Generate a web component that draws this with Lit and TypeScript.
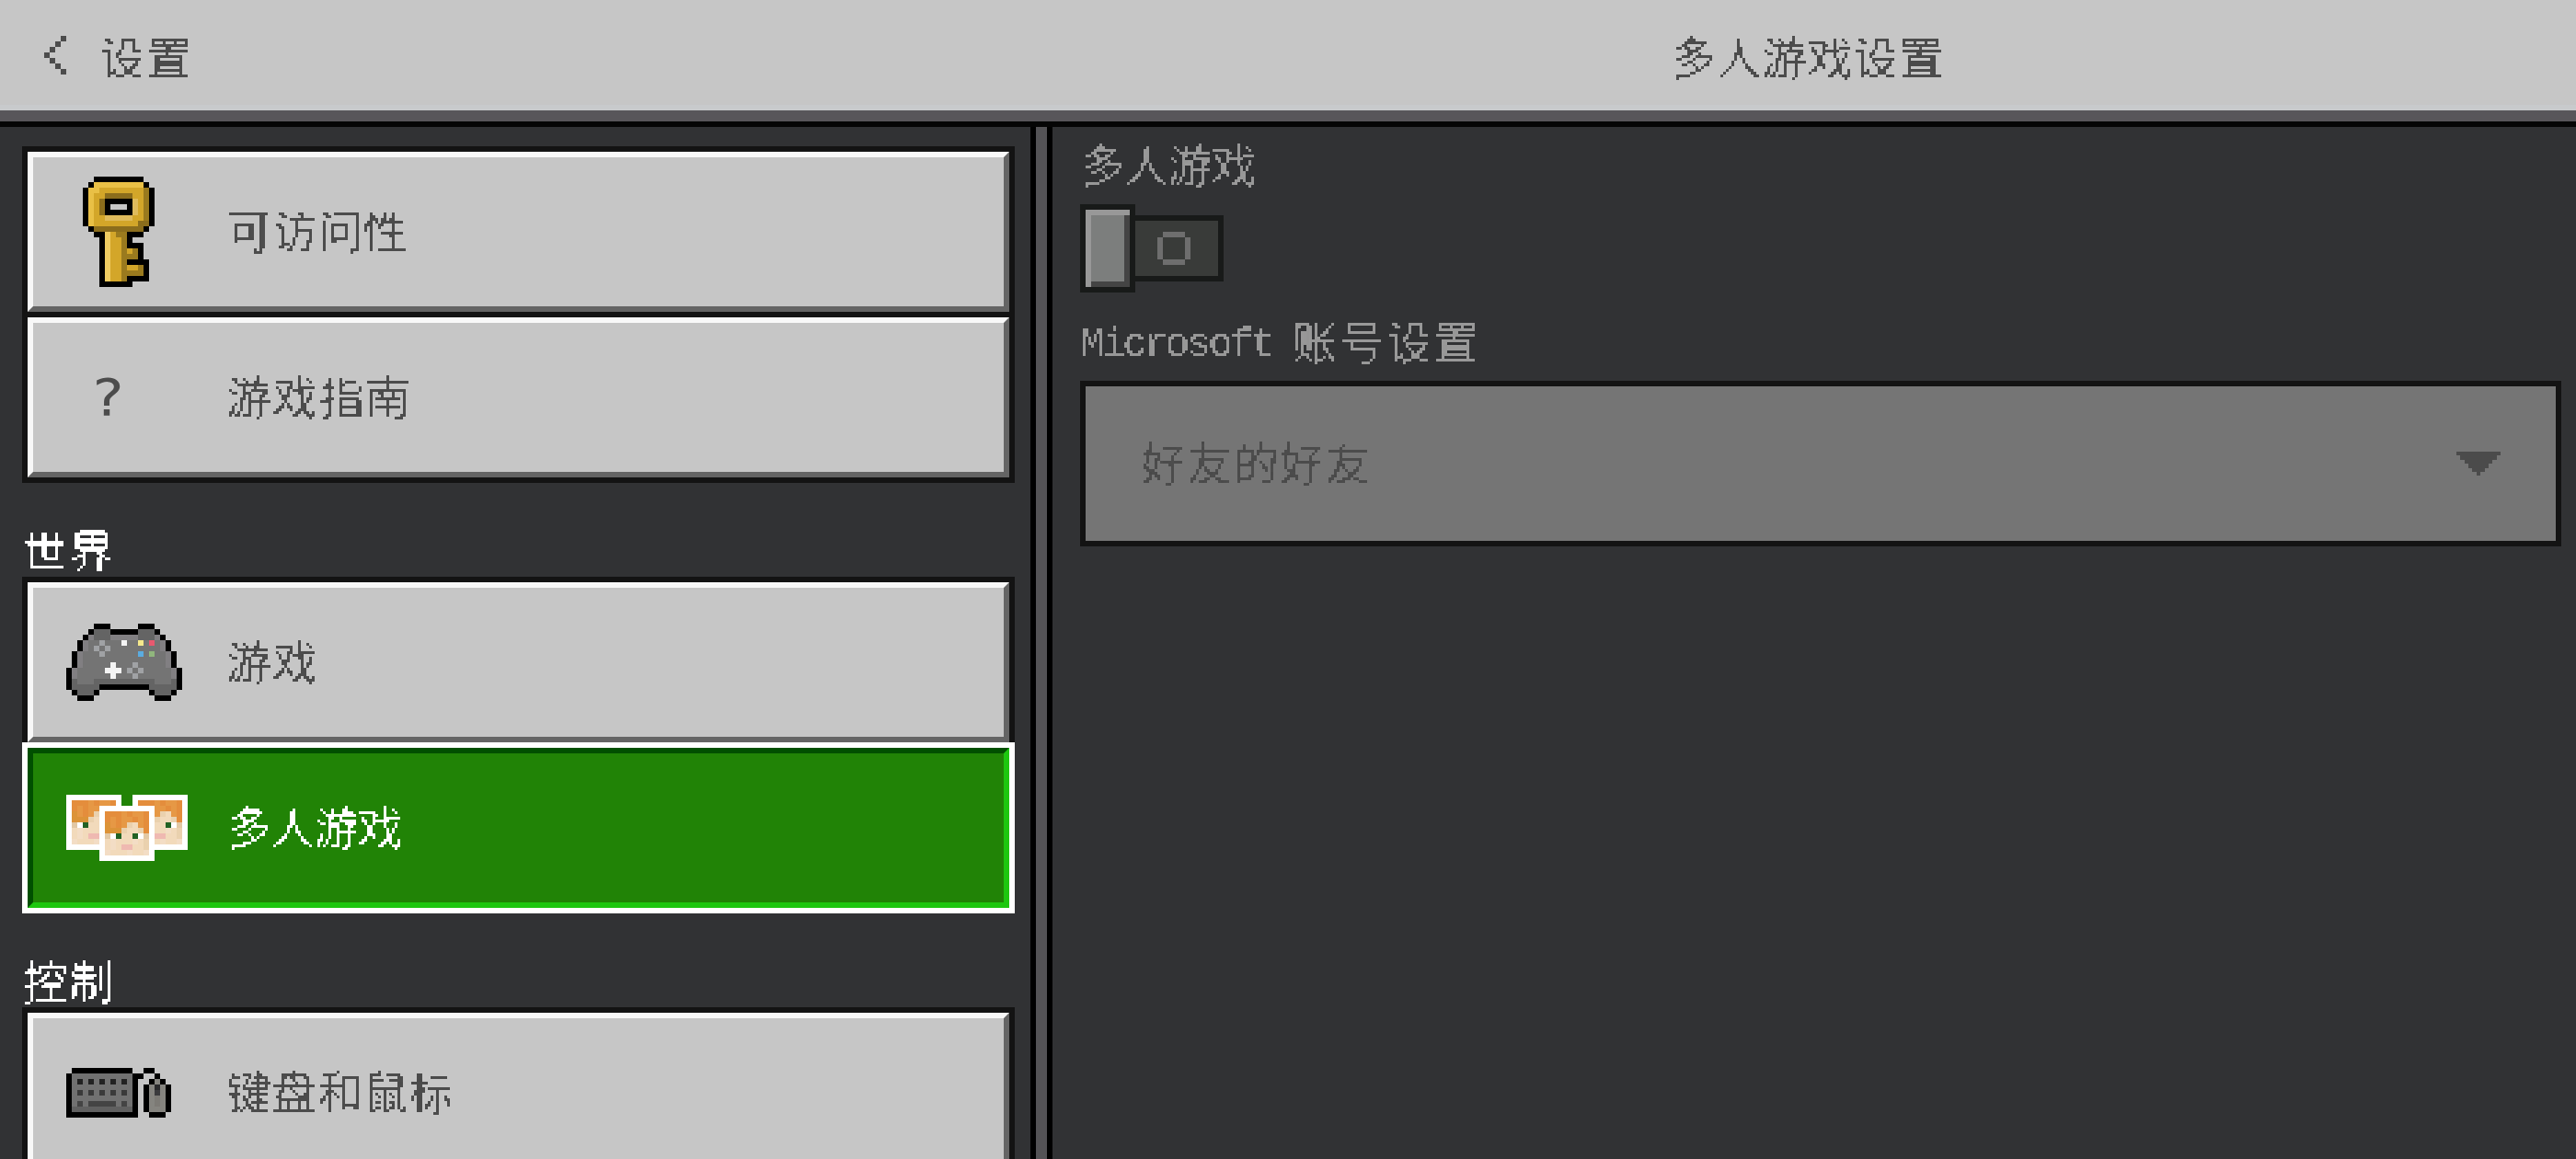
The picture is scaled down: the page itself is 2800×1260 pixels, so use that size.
import { html, svg, css, LitElement } from "lit";
import { customElement, property, state } from "lit/decorators.js";

type Palette = Record<string, string>;

const KEY = [
  "..KKKKKKKKK..",
  ".KLLLLLLLLLK.",
  "KLLMMMMMMMMDK",
  "KLMMEEEEEMMDK",
  "KLMEKKKKKPMDK",
  "KLMEK...KPMDK",
  "KLMEKKKKKPMDK",
  "KLMMPPPPPMMDK",
  "KLMMMMMMMMEEK",
  ".KEEEEEEEEEK.",
  "..KKQMDDKKK..",
  "...KQMMDK....",
  "...KQMMDKKK..",
  "...KQMMDMDK..",
  "...KQMMDDDK..",
  "...KQMMDKKKK.",
  "...KQMMDMMDK.",
  "...KQMMDDDDK.",
  "...KQMMDKKKK.",
  "...KKKKKK....",
];

const KEY_COLORS: Palette = {
  K: "#000000",
  L: "#e9c046",
  M: "#d3a629",
  D: "#9a7a1e",
  E: "#8b6d1c",
  P: "#dfbb5c",
  Q: "#efcc62",
};

const PAD = [
  ".....KKK.....KKK.....",
  "....KdddKKKKKdddK....",
  "...KldddllllldddlK...",
  "..KlbbgbbbwbbybrblK..",
  "..KlbgbgbbbbbbbbblK..",
  ".KlbbbgbbbbbbubvbblK.",
  ".KlbbbbbbbbbbbbbbblK.",
  ".KlbbbbbwbbbgbbbbblK.",
  "KlbbbbbwwwbgbgbbbbblK",
  "KlbbbbbbwbbbgbbbbbblK",
  "KdbbbdddddddddddbbbdK",
  "KdddddKKKKKKKKKdddddK",
  ".KdddK.........KdddK.",
  "..KKK...........KKK..",
];

const PAD_COLORS: Palette = {
  K: "#000000",
  d: "#646464",
  b: "#747474",
  l: "#817f82",
  g: "#a0a2a5",
  w: "#f4f4f4",
  y: "#f5e88c",
  r: "#e8596f",
  u: "#5bace0",
  v: "#90b67d",
};

const KEYBOARD = [
  ".KKKKKKKKKKK..KK...",
  "KbbbbbbbbbbbKK..K..",
  "KbdbdbdbdbdbK..KmK.",
  "KbbbbbbbbbbbK.KmxmK",
  "KbebebebebebK.KmymK",
  "KbbbbbbbbbbbK.KmnmK",
  "KbfbfffffbfbK.KmnmK",
  "KsssssssssssK.KmmmK",
  "KKKKKKKKKKKKK..KKK.",
];

const KEYBOARD_COLORS: Palette = {
  K: "#000000",
  b: "#717171",
  s: "#606060",
  d: "#222222",
  e: "#3a3a3a",
  f: "#444444",
  m: "#85847f",
  n: "#7c7a75",
  x: "#29292b",
  y: "#3b3b3d",
};

const FACE = [
  "ooopoppo",
  "opoppopo",
  "dpopSspo",
  "dddSssSo",
  "hwgssgwh",
  "stssstsS",
  "stsmmssS",
  "tssstsst",
];

const FACE_COLORS: Palette = {
  o: "#e48d3c",
  p: "#e69845",
  d: "#dc9338",
  s: "#f2dabb",
  t: "#f3ddc5",
  S: "#ead1ae",
  h: "#e2c8a4",
  w: "#ffffff",
  g: "#236224",
  m: "#efb9b1",
};

const CHEVRON = ["...K", "..K.", ".K..", "K...", ".K..", "..K.", "...K"];

const RING = [".KKKK.", "K....K", "K....K", "K....K", "K....K", ".KKKK."];

function cells(rows: string[], colors: Palette, dx = 0, dy = 0) {
  const out: unknown[] = [];
  rows.forEach((row, y) => {
    for (let x = 0; x < row.length; ) {
      const key = row[x];
      let end = x + 1;
      while (row[end] === key) end++;
      if (colors[key]) {
        out.push(
          svg`<rect x=${x + dx} y=${y + dy} width=${end - x} height="1" fill=${colors[key]}></rect>`,
        );
      }
      x = end;
    }
  });
  return out;
}

function sprite(rows: string[], colors: Palette) {
  const w = rows[0].length;
  const h = rows.length;
  return html`<svg
    width=${w * 6}
    height=${h * 6}
    viewBox="0 0 ${w} ${h}"
    shape-rendering="crispEdges"
  >
    ${cells(rows, colors)}
  </svg>`;
}

function portrait(x: number, y: number) {
  return svg`
    <rect x=${x} y=${y} width="10" height="10" fill="#ffffff"></rect>
    ${cells(FACE, FACE_COLORS, x + 1, y + 1)}
  `;
}

function friends() {
  return html`<svg
    width="132"
    height="72"
    viewBox="0 0 22 12"
    shape-rendering="crispEdges"
  >
    ${portrait(0, 0)} ${portrait(12, 0)} ${portrait(6, 2)}
  </svg>`;
}

// Samples the glyphs once per 3px cell and grows every sample to a block.
function pixelFilter(id: string, blur: number, steps: string) {
  return svg`
    <filter
      id=${id}
      filterUnits="userSpaceOnUse"
      primitiveUnits="userSpaceOnUse"
      x="-6"
      y="-12"
      width="600"
      height="84"
      color-interpolation-filters="sRGB"
    >
      <feGaussianBlur in="SourceGraphic" stdDeviation=${blur} result="soft" />
      <feFlood x="1" y="1" width="1" height="1" flood-color="#000" result="dot" />
      <feOffset in="dot" x="0" y="0" width="3" height="3" result="cell" />
      <feTile in="cell" result="grid" />
      <feComposite in="soft" in2="grid" operator="in" result="samples" />
      <feMorphology in="samples" operator="dilate" radius="1" />
      <feComponentTransfer>
        <feFuncA type="discrete" tableValues=${steps} />
      </feComponentTransfer>
    </filter>
  `;
}

interface Item {
  id: string;
  label: string;
  tracking?: string;
  icon: () => unknown;
}

interface Section {
  title?: string;
  items: Item[];
}

const SECTIONS: Section[] = [
  {
    items: [
      {
        id: "access",
        label: "可访问性",
        tracking: "snug",
        icon: () => sprite(KEY, KEY_COLORS),
      },
      {
        id: "guide",
        label: "游戏指南",
        icon: () => html`<span class="question">?</span>`,
      },
    ],
  },
  {
    title: "世界",
    items: [
      { id: "game", label: "游戏", icon: () => sprite(PAD, PAD_COLORS) },
      { id: "multi", label: "多人游戏", tracking: "tight", icon: friends },
    ],
  },
  {
    title: "控制",
    items: [
      {
        id: "keyboard",
        label: "键盘和鼠标",
        tracking: "snug",
        icon: () => sprite(KEYBOARD, KEYBOARD_COLORS),
      },
    ],
  },
];

@customElement("app-root")
export class AppRoot extends LitElement {
  @property()
  account: string = "好友的好友";

  @state()
  private selected: string = "multi";

  private renderItem(item: Item) {
    const active = item.id === this.selected;
    return html`
      <button
        class="item ${active ? "active" : ""}"
        @click=${() => (this.selected = item.id)}
      >
        <span class="bevel">
          <span class="icon ${item.id}">${item.icon()}</span>
          <span class="text ${item.tracking ?? ""}">${item.label}</span>
        </span>
      </button>
    `;
  }

  render() {
    return html`
      <svg class="defs" width="0" height="0">
        ${pixelFilter("pixels", 1, "0 0 1 1 1 1 1 1 1")}
        ${pixelFilter("pixels-latin", 0.6, "0 0 0 0 0 1 1 1 1 1")}
      </svg>

      <header class="bar">
        <div class="back">
          ${sprite(CHEVRON, { K: "#4c4c4c" })}
          <span class="text wide">设置</span>
        </div>
        <div class="title"><span class="text snug">多人游戏设置</span></div>
      </header>

      <main class="body">
        <nav class="menu">
          ${SECTIONS.map(
            (section) => html`
              ${section.title
                ? html`<h2 class="heading">
                    <span class="text wide">${section.title}</span>
                  </h2>`
                : ""}
              ${section.items.map((item) => this.renderItem(item))}
            `,
          )}
        </nav>
        <div class="divider"></div>
        <section class="content">
          <div class="label"><span class="text tight">多人游戏</span></div>
          <div class="toggle">
            <span class="knob"></span>
            <span class="slot">${sprite(RING, { K: "#6e6e6e" })}</span>
          </div>
          <div class="label">
            <span class="text latin">Microsoft</span>
            <span class="text wide">账号设置</span>
          </div>
          <div class="dropdown">
            <span class="text">${this.account}</span>
            <svg
              width="48"
              height="26"
              viewBox="0 0 48 26"
              shape-rendering="crispEdges"
            >
              <path
                fill="#4b4b4b"
                d="M0 0H48V4H44V9H39V13H35V18H31V22H26V26H22V22H17V18H13V13H9V9H4V4H0Z"
              />
            </svg>
          </div>
        </section>
      </main>
    `;
  }

  static styles = css`
    :host {
      display: flex;
      flex-direction: column;
      box-sizing: border-box;
      width: 100%;
      height: 1260px;
      overflow: hidden;
      background: #313234;
      font-family: "Noto Sans CJK SC", sans-serif;
      font-size: 49px;
      line-height: 48px;
      color: #4c4c4c;
    }

    * {
      box-sizing: border-box;
    }

    svg {
      display: block;
      flex: none;
    }

    .defs {
      height: 0;
    }

    .text {
      display: block;
      height: 48px;
      margin-left: -3px;
      line-height: 42px;
      font-weight: 100;
      letter-spacing: 1.25px;
      white-space: nowrap;
      filter: url(#pixels);
    }

    .text.wide {
      letter-spacing: 2px;
    }

    .text.snug {
      letter-spacing: 0.5px;
    }

    .text.tight {
      letter-spacing: -1.5px;
    }

    .text.latin {
      width: 234px;
      font-family: "Liberation Mono", monospace;
      font-size: 44px;
      font-weight: 400;
      line-height: 54px;
      letter-spacing: -3.2px;
      filter: url(#pixels-latin);
    }

    .bar {
      display: grid;
      grid-template-columns: 1132px 1fr;
      flex: none;
      height: 138px;
      padding-top: 39px;
      background: #c6c6c6;
      border-bottom: 6px solid #050505;
      box-shadow:
        inset 0 -12px #58565a,
        inset 0 -18px #c8cacc;
    }

    .back {
      display: flex;
      align-items: flex-start;
      gap: 39px;
      padding-left: 48px;
    }

    .title {
      display: flex;
      justify-content: center;
    }

    .body {
      display: flex;
      flex: 1;
      min-height: 0;
    }

    .menu {
      display: flex;
      flex-direction: column;
      width: 1120px;
      padding: 21px 17px 0 24px;
      overflow: hidden;
    }

    .heading {
      flex: none;
      height: 108px;
      margin: 0;
      padding: 57px 0 0 3px;
      font-size: inherit;
      color: #ffffff;
    }

    .item {
      flex: none;
      display: block;
      height: 186px;
      margin: 0 0 -6px;
      padding: 0;
      border: 6px solid #131313;
      background: #c6c6c6;
      color: #4c4c4c;
      font: inherit;
      text-align: left;
    }

    .bevel {
      display: flex;
      align-items: center;
      height: 100%;
      border: 6px solid;
      border-color: #f8f8f8 #646464 #646464 #f8f8f8;
    }

    .active {
      position: relative;
      border-color: #ffffff;
      background: #218306;
      color: #ffffff;
    }

    .active .bevel {
      border-color: #004f00 #1dc70f #1dc70f #004f00;
    }

    .icon {
      display: flex;
      width: 213px;
      padding-left: 36px;
    }

    .icon.access {
      padding-left: 54px;
    }

    .icon.guide {
      padding-left: 64px;
    }

    .question {
      font-family: "DejaVu Sans Mono", monospace;
      font-size: 56px;
      line-height: 60px;
      transform: scaleX(1.15);
    }

    .divider {
      flex: none;
      width: 24px;
      background: #545356;
      border: solid #000000;
      border-width: 0 6px;
    }

    .content {
      flex: 1;
      display: flex;
      flex-direction: column;
      padding: 18px 16px 0 30px;
    }

    .label {
      display: flex;
      padding-left: 3px;
      color: #989898;
    }

    .toggle {
      display: flex;
      align-items: center;
      height: 96px;
      margin: 18px 0 30px;
    }

    .knob {
      width: 60px;
      height: 96px;
      border: 6px solid #181a19;
      background: #7c7e7d;
      box-shadow:
        inset 6px 6px #989898,
        inset -6px -6px #444444;
    }

    .slot {
      display: flex;
      align-items: center;
      width: 96px;
      height: 72px;
      padding-left: 24px;
      border: 6px solid #181a19;
      border-left: 0;
      background: #393b39;
    }

    .dropdown {
      display: flex;
      align-items: center;
      justify-content: space-between;
      height: 180px;
      margin-top: 18px;
      padding: 0 60px 0 63px;
      border: 6px solid #131313;
      background: #757575;
      color: #4c4c4c;
    }
  `;
}

declare global {
  interface HTMLElementTagNameMap {
    "app-root": AppRoot;
  }
}
